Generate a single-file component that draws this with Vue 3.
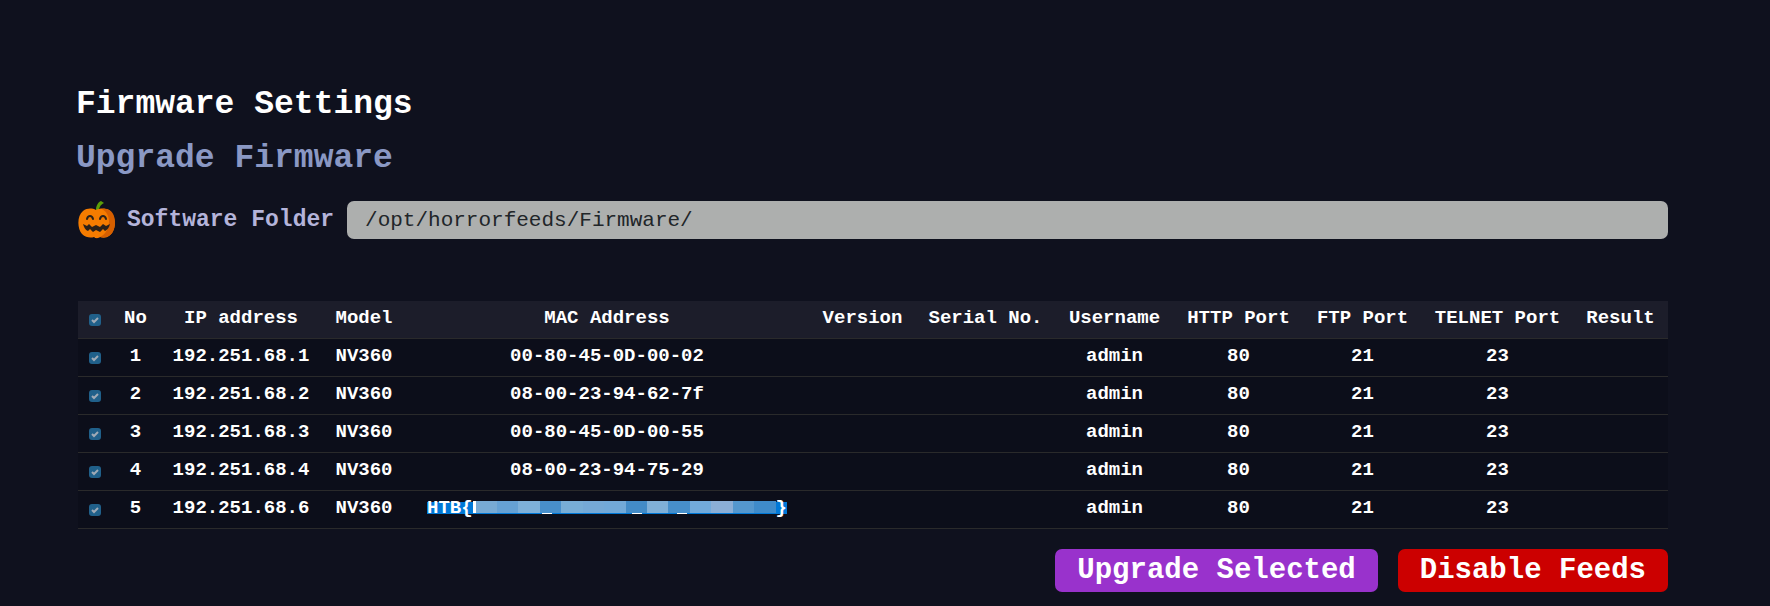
<script setup>
import { ref } from 'vue'

const folder = ref('/opt/horrorfeeds/Firmware/')

const columns = [
  { label: 'No', width: 47 },
  { label: 'IP address', width: 164 },
  { label: 'Model', width: 82 },
  { label: 'MAC Address', width: 404 },
  { label: 'Version', width: 107 },
  { label: 'Serial No.', width: 139 },
  { label: 'Username', width: 119 },
  { label: 'HTTP Port', width: 129 },
  { label: 'FTP Port', width: 119 },
  { label: 'TELNET Port', width: 151 },
  { label: 'Result', width: 95 },
]

const devices = [
  { ip: '192.251.68.1', mac: '00-80-45-0D-00-02' },
  { ip: '192.251.68.2', mac: '08-00-23-94-62-7f' },
  { ip: '192.251.68.3', mac: '00-80-45-0D-00-55' },
  { ip: '192.251.68.4', mac: '08-00-23-94-75-29' },
  { ip: '192.251.68.6', mac: null },
]

const tiles = [
  '#78aad4', '#66a1d4', '#7eb0d9', '#488fcb', '#78add6', '#75a9d6', '#72a9d8',
  '#438bc7', '#80b0d8', '#478fcb', '#72aadb', '#8baed6', '#5497ce', '#3f8bca',
]
</script>

<template>
  <main class="page">
    <h1>Firmware Settings</h1>
    <h2>Upgrade Firmware</h2>

    <div class="folder">
      <svg class="pumpkin" viewBox="0 0 38 38" aria-hidden="true">
        <path d="M18 9C18 5 20 1 23 0L26 2C22 4 21 7 21 10Z" fill="#5c9e08" />
        <path d="M18 9C14 7 9 7 5 10C-1 15 -1 27 4 33C8 37 13 37 16 36C18 38 21 37 22 36C28 38 33 35 35 30C39 22 36 13 31 9C27 7 22 7 18 9Z" fill="#f57c00" />
        <path d="M24 8C33 6 37 14 37 21C37 30 33 38 22 36C28 33 31 27 31 20C31 15 28 10 24 8Z" fill="#d65f00" />
        <path d="M9 18C10 14 14 14 15 18M22 18C23 14 27 14 28 18" fill="none" stroke="#2b2119" stroke-width="2" stroke-linecap="round" />
        <path d="M5 23L9 25L11 23L14 26L18 24L22 26L25 23L28 25L32 23C31 27 29 29 27 30L25 28L22 31L18 29L15 31L12 28L10 30C7 29 6 26 5 23Z" fill="#2b2119" />
      </svg>
      <label for="folder">Software Folder</label>
      <input id="folder" v-model="folder" type="text" readonly />
    </div>

    <table>
      <colgroup>
        <col class="pick" />
        <col v-for="c in columns" :key="c.label" :style="{ width: c.width + 'px' }" />
      </colgroup>
      <thead>
        <tr>
          <th>
            <span class="check">
              <input type="checkbox" checked disabled aria-label="Select all" />
              <svg viewBox="0 0 12 12" aria-hidden="true"><path d="M3 6L5 8L9 4" /></svg>
            </span>
          </th>
          <th v-for="c in columns" :key="c.label">{{ c.label }}</th>
        </tr>
      </thead>
      <tbody>
        <tr v-for="(d, i) in devices" :key="d.ip">
          <td>
            <span class="check">
              <input type="checkbox" checked disabled :aria-label="'Select ' + d.ip" />
              <svg viewBox="0 0 12 12" aria-hidden="true"><path d="M3 6L5 8L9 4" /></svg>
            </span>
          </td>
          <td>{{ i + 1 }}</td>
          <td>{{ d.ip }}</td>
          <td>NV360</td>
          <td>
            <template v-if="d.mac">{{ d.mac }}</template>
            <span v-else class="marked">
              <span>HTB{</span>
              <span class="mosaic">
                <i v-for="(t, n) in tiles" :key="n" :style="{ background: t }"></i>
                <b class="dash first"></b>
                <b class="dash second"></b>
                <b class="dash third"></b>
              </span>
              <span>}</span>
            </span>
          </td>
          <td></td>
          <td></td>
          <td>admin</td>
          <td>80</td>
          <td>21</td>
          <td>23</td>
          <td></td>
        </tr>
      </tbody>
    </table>

    <div class="actions">
      <button type="button" class="upgrade">Upgrade Selected</button>
      <button type="button" class="disable">Disable Feeds</button>
    </div>
  </main>
</template>

<style>
body {
  background: #0f111e;
}
</style>

<style scoped>
.page {
  box-sizing: border-box;
  min-height: 100vh;
  padding: 85px 102px 12px 78px;
  font-family: "Liberation Mono", monospace;
  font-weight: 700;
  color: #fff;
  background: #0f111e;
}

h1,
h2 {
  margin: 0 0 14px -2px;
  font-size: 33px;
  line-height: 40px;
}

h2 {
  margin-bottom: 22px;
  color: #8a98c4;
}

.folder {
  display: flex;
  align-items: center;
  height: 38px;
}

.pumpkin {
  flex: none;
  width: 38px;
  height: 38px;
}

.folder label {
  margin: 0 13px 0 11px;
  font-size: 23px;
  line-height: 38px;
  white-space: nowrap;
  color: #b4b4da;
}

.folder input {
  flex: 1;
  min-width: 0;
  box-sizing: border-box;
  height: 38px;
  padding: 0 18px;
  border: 0;
  border-radius: 7px;
  background: #adafae;
  color: #212529;
  font: 400 21px "Liberation Mono", monospace;
}

table {
  width: 100%;
  margin-top: 62px;
  table-layout: fixed;
  border-collapse: separate;
  border-spacing: 0;
  font-size: 19px;
  line-height: 20px;
  background: #0c0e1a;
}

.pick {
  width: 34px;
}

th,
td {
  box-sizing: border-box;
  height: 38px;
  padding: 0 0 4px;
  border-bottom: 1px solid #2a2a2b;
  text-align: center;
  white-space: nowrap;
}

th {
  background: #1c1d2a;
}

.check {
  display: grid;
  width: 12px;
  height: 12px;
  margin: 5px auto 0;
}

.check input,
.check svg {
  grid-area: 1 / 1;
  width: 12px;
  height: 12px;
  margin: 0;
}

.check input {
  appearance: none;
  border-radius: 3px;
  background: #20608a;
}

.check path {
  fill: none;
  stroke: #a0aab6;
  stroke-width: 2;
}

.marked {
  display: inline-flex;
  align-items: center;
  height: 12px;
  background: #0078d7;
}

.mosaic {
  position: relative;
  display: flex;
  width: 300px;
  height: 12px;
  margin-bottom: 2px;
  border-left: 3px solid #fff;
}

.mosaic i {
  flex: 1;
}

.dash {
  position: absolute;
  top: 100%;
  width: 10px;
  height: 1px;
  background: #fff;
}

.first {
  left: 22%;
}

.second {
  left: 52%;
}

.third {
  left: 67%;
}

.actions {
  display: flex;
  justify-content: flex-end;
  gap: 20px;
  margin-top: 20px;
}

button {
  height: 43px;
  padding: 0 22px 1px;
  border: 0;
  border-radius: 7px;
  color: #fff;
  font: 700 29px "Liberation Mono", monospace;
}

.upgrade {
  background: #9932cc;
}

.disable {
  background: #cc0000;
}
</style>
